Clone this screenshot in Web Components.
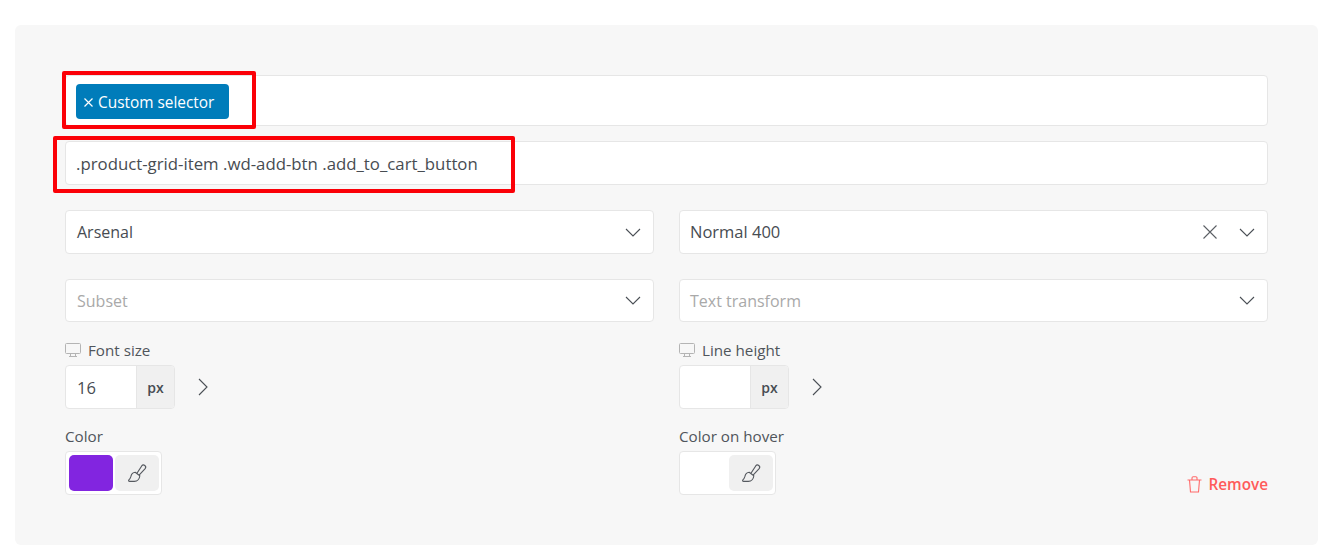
<!DOCTYPE html>
<html>
<head>
<meta charset="utf-8">
<style>
  html, body { margin: 0; padding: 0; background: #fff; }
  body { font-family: "Open Sans", "Noto Sans", sans-serif; color: #474c52; }
</style>
</head>
<body>
<options-panel>
  <tag-field slot="full">Custom selector</tag-field>
  <text-field slot="full">.product-grid-item .wd-add-btn .add_to_cart_button</text-field>
  <select-field value="Arsenal" style="--gap-after: 25px"></select-field>
  <select-field value="Normal 400" clearable style="--gap-after: 25px; --pad-left: 10px; --size: 16.500px; --text-lift: 1px"></select-field>
  <select-field placeholder="Subset" style="--h: 43px; --gap-after: 16px"></select-field>
  <select-field placeholder="Text transform" style="--h: 43px; --gap-after: 16px; --pad-left: 10px"></select-field>
  <size-field label="Font size" value="16"></size-field>
  <size-field label="Line height"></size-field>
  <color-field label="Color" color="#8225e0"></color-field>
  <color-field label="Color on hover"><remove-button></remove-button></color-field>
</options-panel>

<script>
const chevron = `<svg width="16" height="9" viewBox="0 0 16 9" fill="none" stroke="#4a4f55" stroke-width="1.1"><path d="M1 1l7 7 7-7"/></svg>`
const brush = `<svg width="21" height="21" viewBox="0 0 20 20" fill="none" stroke="#55595f" stroke-width="1.1" stroke-linejoin="round"><path d="M9.500 9.800L14 2.800a2.100 2.100 0 0 1 3.300 2.600L11.500 11.500"/><path d="M7.800 8.800l4.400 3.400C12 15 10 17.500 7 17.500H2.500c-1 0-1.300-1-.5-1.700 1-.8 1.300-1.800 1.800-3.300.5-2 2.200-3.500 4-3.700z"/></svg>`

class OptionsPanel extends HTMLElement {
  constructor() {
    super()
    this.attachShadow({ mode: "open" }).innerHTML = `
      <style>
        :host { display: block; padding: 25px 15px 2px; }
        .panel { position: relative; box-sizing: border-box; height: 520px; padding: 50px; background: #f7f7f7; border-radius: 6px; }
        .full { display: flex; flex-direction: column; gap: 15px; margin-bottom: 25px; }
        .cols { display: grid; grid-template-columns: 589px 589px; column-gap: 25px; }
      </style>
      <div class="panel">
        <div class="full"><slot name="full"></slot></div>
        <div class="cols"><slot></slot></div>
        <highlight-box style="left:47px;top:46px;width:194px;height:58px"></highlight-box>
        <highlight-box style="left:38px;top:111px;width:462px;height:57px"></highlight-box>
      </div>`
  }
}

class HighlightBox extends HTMLElement {
  constructor() {
    super()
    this.attachShadow({ mode: "open" }).innerHTML = `
      <style>
        :host { position: absolute; box-sizing: border-box; border: 4px solid #fb0007; border-radius: 2px; pointer-events: none; }
      </style>`
  }
}

class TagField extends HTMLElement {
  constructor() {
    super()
    this.attachShadow({ mode: "open" }).innerHTML = `
      <style>
        :host { display: flex; align-items: center; box-sizing: border-box; height: 51px; padding: 2px 10px 0; background: #fff; border: 1px solid #e6e6e6; border-radius: 4px; }
        .tag { display: flex; align-items: center; gap: 4px; box-sizing: border-box; height: 35px; padding: 1px 15px 0 7px; background: #007cba; color: #fff; border-radius: 4px; font-size: 15.400px; font-weight: 500; white-space: nowrap; }
      </style>
      <span class="tag">
        <svg width="11" height="11" viewBox="0 0 11 11" stroke="#fff" stroke-width="1.200"><path d="M1.500 1.500l8 8M9.500 1.500l-8 8"/></svg>
        <slot></slot>
      </span>`
  }
}

class TextField extends HTMLElement {
  constructor() {
    super()
    this.attachShadow({ mode: "open" }).innerHTML = `
      <style>
        :host { display: flex; align-items: center; box-sizing: border-box; height: 44px; padding: 1px 10px 0; background: #fff; border: 1px solid #e6e6e6; border-radius: 4px; font-size: 16.800px; white-space: nowrap; }
      </style>
      <slot></slot>`
  }
}

class SelectField extends HTMLElement {
  connectedCallback() {
    const placeholder = this.getAttribute("placeholder")
    const text = placeholder || this.getAttribute("value")
    const clear = this.hasAttribute("clearable")
      ? `<svg class="clear" width="14" height="14" viewBox="0 0 14 14" stroke="#5b5f64" stroke-width="1.100"><path d="M.5.5l13 13M13.500.5l-13 13"/></svg>`
      : ""
    this.attachShadow({ mode: "open" }).innerHTML = `
      <style>
        :host { display: flex; align-items: center; box-sizing: border-box; height: var(--h, 44px); margin-bottom: var(--gap-after, 25px); padding: 0 12px 0 var(--pad-left, 11px); background: #fff; border: 1px solid #e6e6e6; border-radius: 4px; font-size: var(--size, 16px); }
        .text { flex: 1; white-space: nowrap; margin-bottom: var(--text-lift, 0); }
        .muted { color: #a9a9a9; }
        .clear { margin-right: 22px; }
      </style>
      <span class="text ${placeholder ? "muted" : ""}">${text}</span>
      ${clear}${chevron}`
  }
}

class SizeField extends HTMLElement {
  connectedCallback() {
    this.attachShadow({ mode: "open" }).innerHTML = `
      <style>
        :host { display: block; margin-bottom: 16px; }
        .label { display: flex; align-items: center; gap: 7px; height: 23px; font-size: 15.200px; color: #50555b; white-space: nowrap; }
        .row { display: flex; align-items: center; margin-top: 4px; }
        .box { display: flex; box-sizing: border-box; width: 110px; height: 44px; background: #fff; border: 1px solid #e6e6e6; border-radius: 4px; overflow: hidden; font-size: 16.500px; }
        .val { flex: 1; display: flex; align-items: center; padding-left: 11px; }
        .unit { display: flex; align-items: center; justify-content: center; width: 37px; background: #f0f0f0; border-left: 1px solid #e6e6e6; font-size: 14px; font-weight: 600; }
        .more { margin-left: 23px; display: flex; }
      </style>
      <div class="label">
        <svg width="16" height="14" viewBox="0 0 16 14" fill="none" stroke="#b4b4b4" stroke-width="1"><rect x=".5" y=".5" width="15" height="10" rx="1"/><path d="M5.500 11v2M10.500 11v2M4 13.500h8"/></svg>
        ${this.getAttribute("label")}
      </div>
      <div class="row">
        <div class="box"><span class="val">${this.getAttribute("value") || ""}</span><span class="unit">px</span></div>
        <span class="more"><svg width="10" height="18" viewBox="0 0 10 18" fill="none" stroke="#4a4f55" stroke-width="1.100"><path d="M1 1l8 8-8 8"/></svg></span>
      </div>`
  }
}

class ColorField extends HTMLElement {
  connectedCallback() {
    const color = this.getAttribute("color")
    this.attachShadow({ mode: "open" }).innerHTML = `
      <style>
        :host { display: flex; align-items: flex-end; justify-content: space-between; }
        .label { height: 23px; line-height: 23px; font-size: 15.200px; color: #50555b; white-space: nowrap; }
        .picker { display: inline-flex; gap: 2px; box-sizing: border-box; height: 44px; margin-top: 3px; padding: 3px 2px 3px 3px; background: #fff; border: 1px solid #e6e6e6; border-radius: 4px; }
        .swatch { width: 44px; border-radius: 5px; background: ${color || "#fff"}; }
        .btn { display: flex; align-items: center; justify-content: center; width: 44px; background: #f0f0f0; border-radius: 5px; }
      </style>
      <div>
        <div class="label">${this.getAttribute("label")}</div>
        <div class="picker"><span class="swatch"></span><span class="btn">${brush}</span></div>
      </div>
      <slot></slot>`
  }
}

class RemoveButton extends HTMLElement {
  constructor() {
    super()
    this.attachShadow({ mode: "open" }).innerHTML = `
      <style>
        :host { display: flex; align-items: center; gap: 7px; margin-bottom: 2px; color: #ff5b5b; font-size: 15.300px; font-weight: 600; white-space: nowrap; }
      </style>
      <svg width="15" height="17" viewBox="0 0 15 17" fill="none" stroke="#ff6b6b" stroke-width="1.100"><path d="M.5 4h14M2.500 4l1 12h8l1-12M5 4V2c0-.8.5-1.300 1.200-1.300h2.600C9.500.7 10 1.200 10 2v2"/></svg>
      Remove`
  }
}

customElements.define("highlight-box", HighlightBox)
customElements.define("options-panel", OptionsPanel)
customElements.define("tag-field", TagField)
customElements.define("text-field", TextField)
customElements.define("select-field", SelectField)
customElements.define("size-field", SizeField)
customElements.define("color-field", ColorField)
customElements.define("remove-button", RemoveButton)
</script>
</body>
</html>
